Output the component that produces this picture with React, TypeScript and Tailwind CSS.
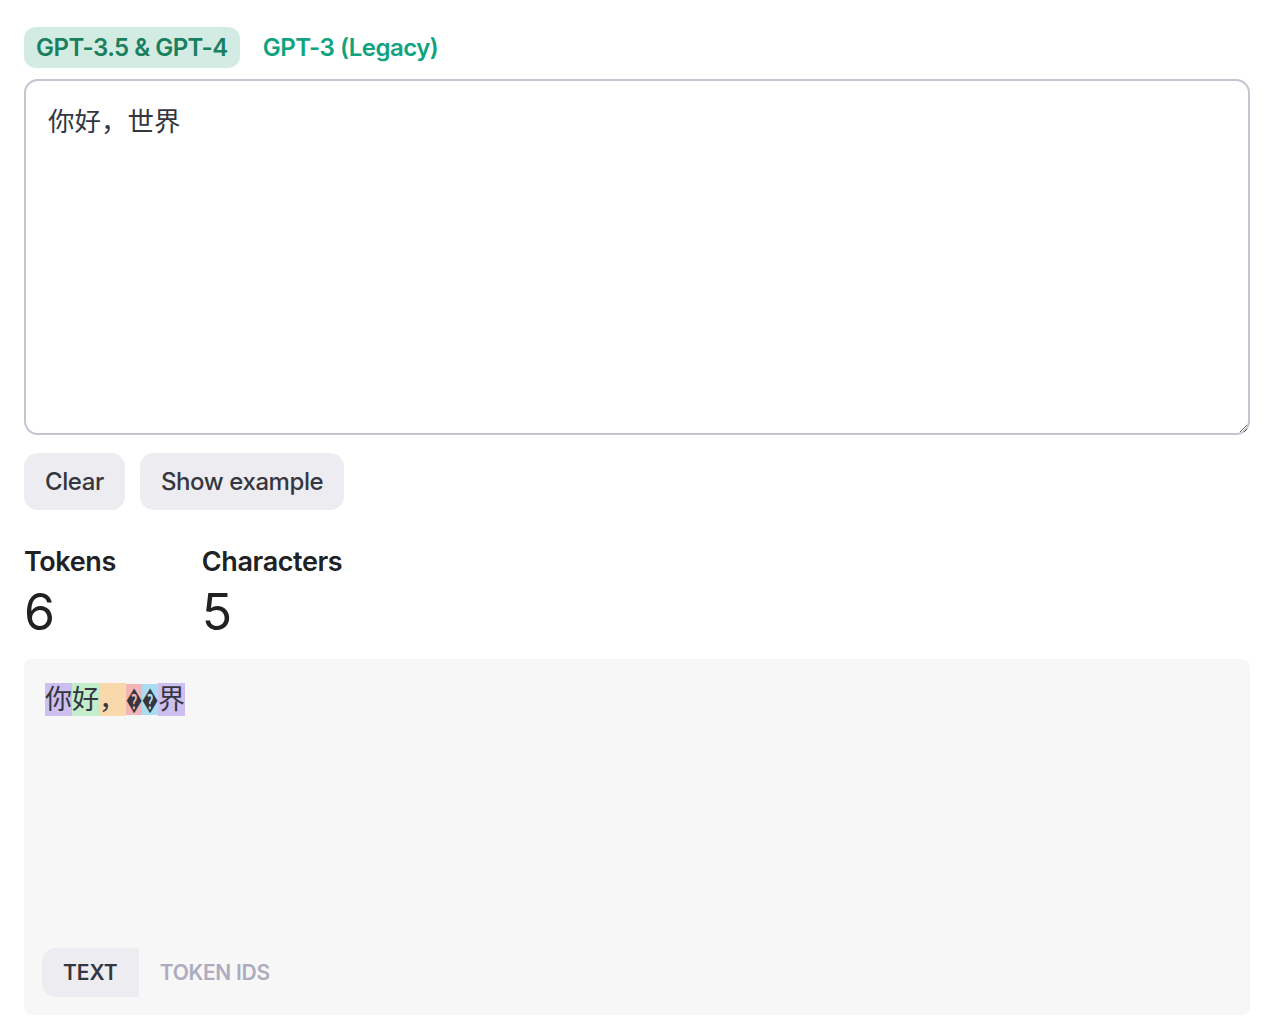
import { useState } from 'react';

const tokens = [
  { text: '你', color: 'bg-[#cdbff0]' },
  { text: '好', color: 'bg-[#c4eecb]' },
  { text: '，', color: 'bg-[#f7d9ac]' },
  { text: '\uFFFD', color: 'bg-[#f4b4b6]' },
  { text: '\uFFFD', color: 'bg-[#a9def2]' },
  { text: '界', color: 'bg-[#cdbff0]' },
];

export default function App() {
  const [model, setModel] = useState('gpt4');
  const [text, setText] = useState('你好，世界');
  const [view, setView] = useState('text');

  const font = "font-['Inter','Noto_Sans_CJK_SC',sans-serif]";

  return (
    <div className={`min-h-screen bg-white pl-6 pr-[30px] pt-[27px] ${font}`}>
      {/* model switch */}
      <div className="flex items-center gap-[11px]">
        <button
          onClick={() => setModel('gpt4')}
          className={`h-[41px] px-[12px] rounded-[12px] text-[24px] font-semibold tracking-[-0.5px] ${
            model === 'gpt4' ? 'bg-[#d2ece3] text-[#1a7f5e]' : 'text-[#10a37f]'
          }`}
        >
          GPT-3.5 &amp; GPT-4
        </button>
        <button
          onClick={() => setModel('gpt3')}
          className={`h-[41px] px-[12px] rounded-[12px] text-[24px] font-semibold tracking-[-0.5px] ${
            model === 'gpt3' ? 'bg-[#d2ece3] text-[#1a7f5e]' : 'text-[#10a37f]'
          }`}
        >
          GPT-3 (Legacy)
        </button>
      </div>

      <textarea
        value={text}
        onChange={(e) => setText(e.target.value)}
        className="mt-[11px] block w-full h-[356px] rounded-[14px] border-2 border-[#c5c5d2] px-[22px] py-[20px] text-[26.5px] leading-[40px] text-[#353740] outline-none"
      />

      {/* actions */}
      <div className="mt-[18px] flex gap-[15px]">
        <button
          onClick={() => setText('')}
          className="h-[57px] px-[21px] rounded-[14px] bg-[#ececf1] text-[24px] font-medium tracking-[-0.4px] text-[#353740]"
        >
          Clear
        </button>
        <button className="h-[57px] px-[21px] rounded-[14px] bg-[#ececf1] text-[24px] font-medium tracking-[-0.4px] text-[#353740]">
          Show example
        </button>
      </div>

      {/* stats */}
      <div className="mt-[35px] flex gap-[86px]">
        <div>
          <div className="text-[27px] font-semibold leading-[34px] text-[#202123] tracking-[-0.4px]">Tokens</div>
          <div className="text-[50px] leading-[66px] text-[#202123]">6</div>
        </div>
        <div>
          <div className="text-[27px] font-semibold leading-[34px] text-[#202123] tracking-[-0.4px]">Characters</div>
          <div className="text-[50px] leading-[66px] text-[#202123]">5</div>
        </div>
      </div>

      {/* tokenized output */}
      <div className="mt-[14px] flex h-[356px] flex-col justify-between rounded-[8px] bg-[#f7f7f8] px-[18px] pb-[18px] pt-[25px]">
        <div className="pl-[3px] text-[27px] leading-[31px] text-[#353740]">
          {view === 'text'
            ? tokens.map((t, i) =>
                t.text === '\uFFFD' ? (
                  <span key={i} className={`${t.color} inline-block w-[16px] overflow-hidden text-center align-top`}>
                    <span className="inline-block scale-x-[0.6] -mx-[5px]">{t.text}</span>
                  </span>
                ) : (
                  <span key={i} className={t.color}>
                    {t.text}
                  </span>
                )
              )
            : '57668, 53901, 3922, 3574, 244, 98220'}
        </div>

        <div className="flex">
          <button
            onClick={() => setView('text')}
            className={`h-[49px] px-[21px] rounded-l-[14px] text-[21px] font-semibold ${
              view === 'text' ? 'bg-[#ececf1] text-[#353740]' : 'text-[#acacbe]'
            }`}
          >
            TEXT
          </button>
          <button
            onClick={() => setView('ids')}
            className={`h-[49px] px-[21px] text-[21px] font-semibold tracking-[-0.3px] ${
              view === 'ids' ? 'bg-[#ececf1] text-[#353740]' : 'text-[#acacbe]'
            }`}
          >
            TOKEN IDS
          </button>
        </div>
      </div>
    </div>
  );
}
